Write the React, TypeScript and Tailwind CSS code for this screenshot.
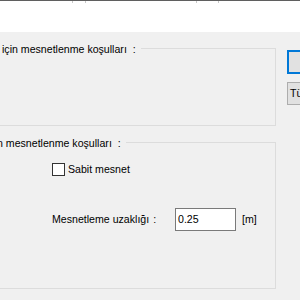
import React from 'react';

const font = { fontFamily: '"Liberation Sans", Arial, sans-serif' };

function GroupTitle({ children, className = '' }: { children: React.ReactNode; className?: string }) {
    return (
        <div className="flex -mt-[7px]">
            <span className={`bg-[#f0f0f0] pr-[5px] leading-[14px] whitespace-nowrap ${className}`}>{children}</span>
        </div>
    );
}

export default function App() {
    return (
        <div
            className="w-[300px] h-[300px] overflow-hidden bg-[#f0f0f0] text-[10.6px] text-black"
            style={font}
        >
            {/* top strip */}
            <div className="relative h-[32px] bg-white border-t border-[#5f5f5f]">
                <div className="absolute left-[72px] top-0 w-px h-[2px] bg-[#c8c8c8]" />
                <div className="absolute left-[85px] top-0 w-px h-[2px] bg-[#c8c8c8]" />
                <div className="absolute left-[196px] top-0 w-px h-[2px] bg-[#c8c8c8]" />
                <div className="absolute left-[218px] top-0 w-px h-[2px] bg-[#c8c8c8]" />
            </div>

            <div className="flex">
                {/* group boxes */}
                <div className="w-[276px] shrink-0">
                    <div className="mt-[16px] h-[78px] border-t border-r border-b border-[#dcdcdc]">
                        <GroupTitle className="pl-[2px]">
                            için mesnetlenme koşulları<span className="ml-[6px]">:</span>
                        </GroupTitle>
                    </div>

                    <div className="mt-[16px] h-[147px] border-t border-r border-b border-[#dcdcdc]">
                        <GroupTitle className="-ml-[3px]">
                            n mesnetlenme koşulları<span className="ml-[6px]">:</span>
                        </GroupTitle>

                        <div className="mt-[13px] ml-[52px] flex items-center gap-[3px] h-[13px]">
                            <div className="w-[13px] h-[13px] border border-[#333] bg-white" />
                            <span className="leading-[13px]">Sabit mesnet</span>
                        </div>

                        <div className="mt-[32px] ml-[52px] flex items-center">
                            <div className="w-[123px] whitespace-nowrap">
                                Mesnetleme uzaklığı<span className="ml-[4px]">:</span>
                            </div>
                            <div className="w-[61px] h-[23px] border border-[#7a7a7a] bg-white flex items-center pl-[2px]">
                                0.25
                            </div>
                            <span className="ml-[6px]">[m]</span>
                        </div>
                    </div>
                </div>

                {/* buttons */}
                <div className="pl-[11px] shrink-0 flex flex-col">
                    <div className="mt-[18px] w-[75px] h-[24px] border-2 border-[#0078d7] bg-[#e1e1e1]" />
                    <div className="mt-[8px] w-[75px] h-[23px] border border-[#adadad] bg-[#e1e1e1] flex items-center pl-[2px]">
                        Tümünü
                    </div>
                </div>
            </div>
        </div>
    );
}
